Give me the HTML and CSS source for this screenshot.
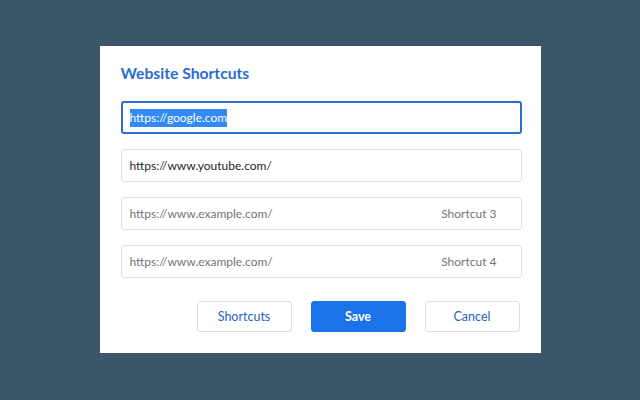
FILE: index.html
```html
<!DOCTYPE html>
<html>
<head>
<meta charset="utf-8">
<link rel="stylesheet" href="styles.css">
</head>
<body>
<div class="dialog">
  <h1 class="title">Website Shortcuts</h1>
  <div class="field field-focus"><span class="selected">https://google.com</span></div>
  <div class="field"><span class="value">https://www.youtube.com/</span></div>
  <div class="field"><span class="placeholder">https://www.example.com/</span><span class="label">Shortcut 3</span></div>
  <div class="field"><span class="placeholder">https://www.example.com/</span><span class="label">Shortcut 4</span></div>
  <div class="actions">
    <button class="btn">Shortcuts</button>
    <button class="btn btn-primary">Save</button>
    <button class="btn">Cancel</button>
  </div>
</div>
</body>
</html>
```
FILE: styles.css
```css
* { box-sizing: border-box; }
html, body { margin: 0; height: 100%; }
body {
  background: #3c5669;
  display: flex;
  align-items: flex-start;
  justify-content: center;
  padding-top: 46px;
  font-family: "Lato", "Open Sans", sans-serif;
}
.dialog {
  width: 441px;
  height: 307px;
  background: #ffffff;
  padding: 17px 19px 21px 21px;
  display: flex;
  flex-direction: column;
}
.title {
  margin: 0 0 18px 0;
  font-size: 15.7px;
  line-height: 20px;
  font-weight: 700;
  color: #2a6dd2;
}
.field {
  height: 33px;
  border: 1px solid #dcdfe3;
  border-radius: 3px;
  margin-bottom: 15px;
  display: flex;
  align-items: center;
  justify-content: space-between;
  padding: 0 24px 0 8px;
  font-size: 12px;
}
.field-focus {
  border: 2px solid #2a6dd2;
  padding-left: 7px;
}
.selected {
  background: #3389f5;
  color: #ffffff;
  line-height: 18px;
}
.value { color: #1f1f1f; }
.placeholder { color: #757575; }
.label { color: #757575; }
.actions {
  margin-top: 8px;
  display: flex;
  justify-content: flex-end;
  gap: 19px;
  padding-right: 2px;
}
.btn {
  width: 95px;
  height: 31px;
  border: 1px solid #dcdfe3;
  border-radius: 3px;
  background: #ffffff;
  color: #2a62c0;
  font-family: inherit;
  font-size: 12.5px;
  cursor: pointer;
}
.btn-primary {
  background: #1a73e8;
  border-color: #1a73e8;
  color: #ffffff;
  font-weight: 700;
}
```
